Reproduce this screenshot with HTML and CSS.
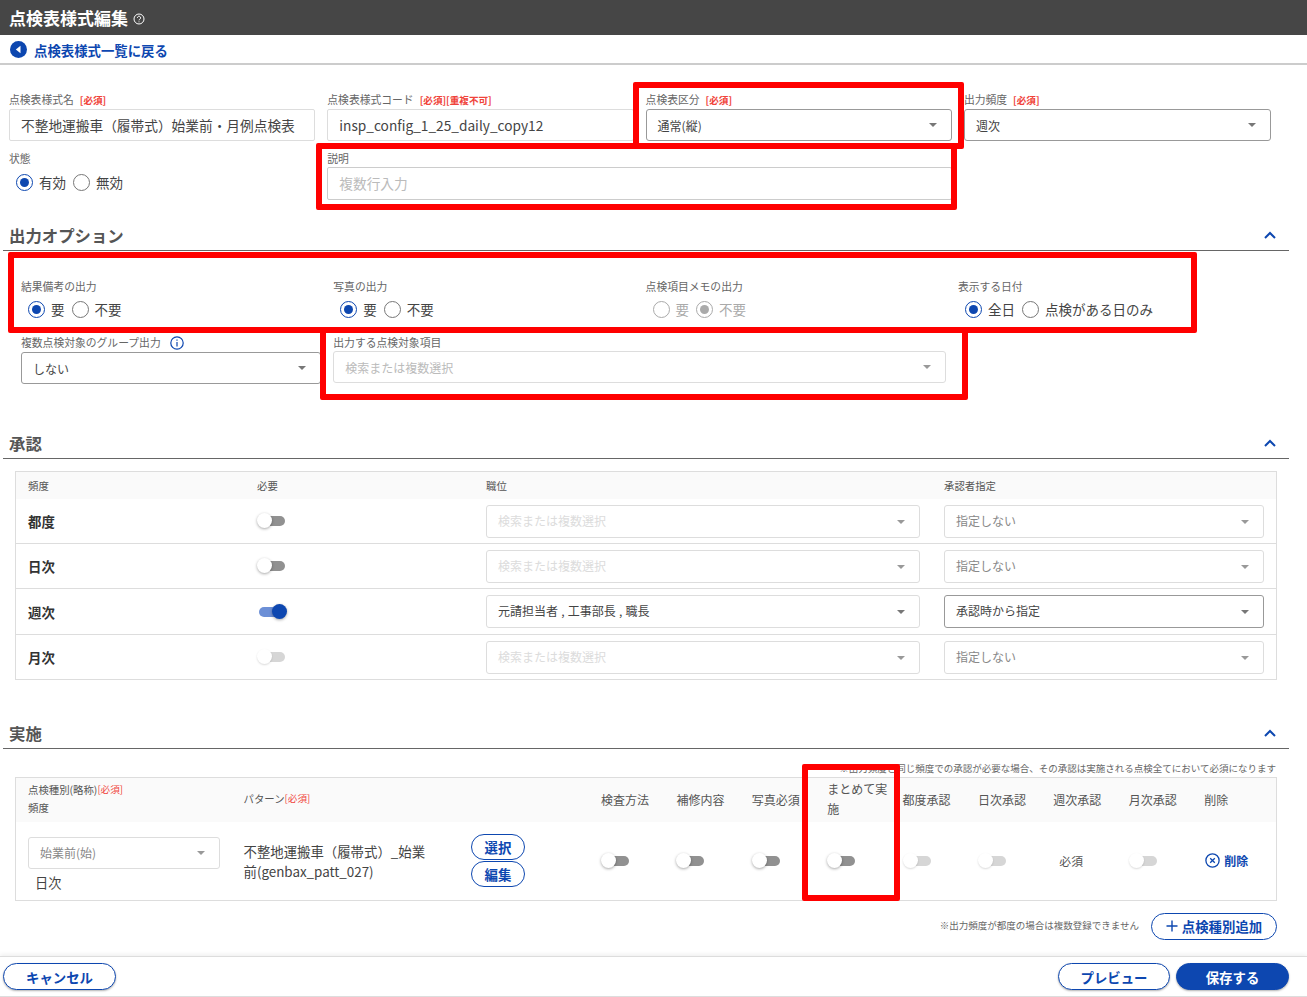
FILE: index.html
```html
<!DOCTYPE html>
<html lang="ja">
<head>
<meta charset="UTF-8" />
<meta name="viewport" content="width=device-width, initial-scale=1.0">
<title>点検表様式編集</title>
<link rel="stylesheet" href="styles.css">
</head>
<body>
<div class="page">

  <header class="title-bar">
    <h1>点検表様式編集</h1>
    <svg class="help-icon" width="12" height="12" viewBox="0 0 12 12" fill="none" stroke="#fff" stroke-width="1">
      <circle cx="6" cy="6" r="5"/>
      <path d="M4.4 4.8a1.6 1.6 0 1 1 2.4 1.4c-.5.3-.8.6-.8 1.1"/>
      <path d="M6 8.4v.9"/>
    </svg>
  </header>

  <nav class="back-bar">
    <svg width="17" height="17" viewBox="0 0 17 17"><circle cx="8.5" cy="8.5" r="8.5" fill="#0d47b0"/><path d="M10.5 4.8v7.4L5.8 8.5z" fill="#fff"/></svg>
    <a class="back-link">点検表様式一覧に戻る</a>
  </nav>

  <section class="basic-form">
    <div class="field">
      <label class="field-label">点検表様式名<em>[必須]</em></label>
      <div class="input">不整地運搬車（履帯式）始業前・月例点検表</div>
    </div>
    <div class="field">
      <label class="field-label">点検表様式コード<em>[必須][重複不可]</em></label>
      <div class="input">insp_config_1_25_daily_copy12</div>
    </div>
    <div class="field">
      <label class="field-label">点検表区分<em>[必須]</em></label>
      <div class="select">通常(縦)</div>
    </div>
    <div class="field">
      <label class="field-label">出力頻度<em>[必須]</em></label>
      <div class="select">週次</div>
    </div>
    <div class="field">
      <label class="field-label">状態</label>
      <div class="radios">
        <span class="radio checked"></span><span>有効</span>
        <span class="radio"></span><span>無効</span>
      </div>
    </div>
    <div class="field span-2">
      <label class="field-label">説明</label>
      <div class="input textarea placeholder">複数行入力</div>
    </div>
  </section>

  <div class="section-head">
    <h2>出力オプション</h2>
    <svg class="chevron" width="14" height="9" viewBox="0 0 14 9" fill="none" stroke="#0d47b0" stroke-width="2"><path d="M2 7l5-5 5 5"/></svg>
  </div>

  <section class="output-options">
    <div class="field">
      <label class="field-label">結果備考の出力</label>
      <div class="radios">
        <span class="radio checked"></span><span>要</span>
        <span class="radio"></span><span>不要</span>
      </div>
    </div>
    <div class="field">
      <label class="field-label">写真の出力</label>
      <div class="radios">
        <span class="radio checked"></span><span>要</span>
        <span class="radio"></span><span>不要</span>
      </div>
    </div>
    <div class="field">
      <label class="field-label">点検項目メモの出力</label>
      <div class="radios disabled">
        <span class="radio"></span><span>要</span>
        <span class="radio checked"></span><span>不要</span>
      </div>
    </div>
    <div class="field">
      <label class="field-label">表示する日付</label>
      <div class="radios">
        <span class="radio checked"></span><span>全日</span>
        <span class="radio"></span><span>点検がある日のみ</span>
      </div>
    </div>
    <div class="field">
      <label class="field-label">複数点検対象のグループ出力
        <svg class="info-icon" width="14" height="14" viewBox="0 0 14 14" fill="none" stroke="#0d47b0" stroke-width="1.2"><circle cx="7" cy="7" r="6.2"/><path d="M7 6v4.4M7 3.4v1.4"/></svg>
      </label>
      <div class="select">しない</div>
    </div>
    <div class="field span-2">
      <label class="field-label">出力する点検対象項目</label>
      <div class="select off placeholder">検索または複数選択</div>
    </div>
  </section>

  <div class="section-head approval-head">
    <h2>承認</h2>
    <svg class="chevron" width="14" height="9" viewBox="0 0 14 9" fill="none" stroke="#0d47b0" stroke-width="2"><path d="M2 7l5-5 5 5"/></svg>
  </div>

  <section class="approval-table">
    <div class="approval-row head">
      <div>頻度</div><div>必要</div><div>職位</div><div>承認者指定</div>
    </div>
    <div class="approval-row">
      <div class="row-name">都度</div>
      <div><span class="toggle"></span></div>
      <div class="select off faint">検索または複数選択</div>
      <div class="select off muted">指定しない</div>
    </div>
    <div class="approval-row">
      <div class="row-name">日次</div>
      <div><span class="toggle"></span></div>
      <div class="select off faint">検索または複数選択</div>
      <div class="select off muted">指定しない</div>
    </div>
    <div class="approval-row tall">
      <div class="row-name">週次</div>
      <div><span class="toggle on"></span></div>
      <div class="select light">元請担当者 , 工事部長 , 職長</div>
      <div class="select">承認時から指定</div>
    </div>
    <div class="approval-row last">
      <div class="row-name">月次</div>
      <div><span class="toggle off"></span></div>
      <div class="select off faint">検索または複数選択</div>
      <div class="select off muted">指定しない</div>
    </div>
  </section>

  <div class="section-head work-head">
    <h2>実施</h2>
    <svg class="chevron" width="14" height="9" viewBox="0 0 14 9" fill="none" stroke="#0d47b0" stroke-width="2"><path d="M2 7l5-5 5 5"/></svg>
  </div>

  <p class="note top-note">※出力頻度と同じ頻度での承認が必要な場合、その承認は実施される点検全てにおいて必須になります</p>

  <section class="work-table">
    <div class="work-row head">
      <div class="small-head">
        <div>点検種別(略称)<em>[必須]</em></div>
        <div>頻度</div>
      </div>
      <div class="small-head">パターン<em>[必須]</em></div>
      <div></div>
      <div>検査方法</div>
      <div>補修内容</div>
      <div>写真必須</div>
      <div class="wrap-cell">まとめて実施</div>
      <div>都度承認</div>
      <div>日次承認</div>
      <div>週次承認</div>
      <div>月次承認</div>
      <div>削除</div>
    </div>
    <div class="work-row body">
      <div class="kind-cell">
        <div class="select off muted">始業前(始)</div>
        <div class="freq">日次</div>
      </div>
      <div class="pattern-name">不整地運搬車（履帯式）_始業前(genbax_patt_027)</div>
      <div class="pattern-btns">
        <button class="pill">選択</button>
        <button class="pill">編集</button>
      </div>
      <div><span class="toggle"></span></div>
      <div><span class="toggle"></span></div>
      <div><span class="toggle"></span></div>
      <div><span class="toggle"></span></div>
      <div><span class="toggle off"></span></div>
      <div><span class="toggle off"></span></div>
      <div class="required-text">必須</div>
      <div><span class="toggle off"></span></div>
      <div class="delete-cell">
        <svg width="15" height="15" viewBox="0 0 15 15" fill="none" stroke="#0d47b0" stroke-width="1.3"><circle cx="7.5" cy="7.5" r="6.6"/><path d="M5.2 5.2l4.6 4.6M9.8 5.2l-4.6 4.6"/></svg>
        <span>削除</span>
      </div>
    </div>
  </section>

  <div class="add-row">
    <p class="note">※出力頻度が都度の場合は複数登録できません</p>
    <button class="pill add-btn">
      <svg width="12" height="12" viewBox="0 0 12 12" stroke="#0d47b0" stroke-width="1.4"><path d="M6 .5v11M.5 6h11"/></svg>
      点検種別追加
    </button>
  </div>

  <footer class="footer-bar">
    <button class="pill foot-btn">キャンセル</button>
    <div class="foot-right">
      <button class="pill foot-btn">プレビュー</button>
      <button class="pill foot-btn primary">保存する</button>
    </div>
  </footer>

  <!-- red annotation boxes drawn over the form -->
  <div class="mark mark-kubun"></div>
  <div class="mark mark-setsumei"></div>
  <div class="mark mark-options"></div>
  <div class="mark mark-taisho"></div>
  <div class="mark mark-matome"></div>
</div>
</body>
</html>
```

FILE: styles.css
```css
* {
  box-sizing: border-box;
}

body {
  margin: 0;
  font-family: "Noto Sans CJK JP", "Noto Sans", sans-serif;
  color: #444;
  background: #fff;
}

.page {
  position: relative;
  width: 1307px;
  height: 997px;
  overflow: hidden;
}

em {
  font-style: normal;
  color: #f0433a;
}

/* Title and back link */
.title-bar {
  height: 35px;
  background: #464646;
  display: flex;
  align-items: center;
  padding-left: 9px;
  color: #fff;
}

.title-bar h1 {
  margin: 0;
  font-size: 17px;
  font-weight: 700;
}

.help-icon {
  margin-left: 5px;
  margin-top: 2px;
}

.back-bar {
  height: 30px;
  display: flex;
  align-items: center;
  gap: 7px;
  padding: 1px 0 0 10px;
  border-bottom: 2px solid #ccc;
}

.back-link {
  font-size: 13.4px;
  font-weight: 700;
  color: #0d47b0;
}

/* Form fields */
.basic-form {
  display: grid;
  grid-template-columns: repeat(4, 318.3px);
  padding: 28px 0 0 9px;
  row-gap: 11px;
}

.basic-form .field {
  padding-right: 11.5px;
}

.basic-form .field:first-child {
  padding-right: 12.3px;
}

.basic-form .radios {
  margin-top: 6px;
}

.output-options {
  display: grid;
  grid-template-columns: repeat(4, 312.3px);
  padding: 29px 0 0 21px;
  row-gap: 17px;
}

.field {
  padding-right: 12px;
}

.span-2 {
  grid-column: span 2;
}

.field-label {
  display: block;
  height: 14px;
  line-height: 12px;
  font-size: 10.8px;
  color: #666;
  margin-bottom: 2px;
  white-space: nowrap;
}

.field-label em {
  font-size: 9.6px;
  font-weight: 700;
  margin-left: 6px;
}

.info-icon {
  vertical-align: -3px;
  margin-left: 7px;
}

.basic-form .span-2 .field-label {
  margin-bottom: 1px;
}

.output-options .span-2 .field-label {
  margin-bottom: 1px;
}

.input,
.select {
  position: relative;
  height: 32px;
  line-height: 31px;
  padding-left: 11px;
  font-size: 13.7px;
  color: #444;
  border: 1px solid #ddd;
  border-radius: 2px;
  white-space: nowrap;
}

.textarea {
  height: 33px;
  border-color: #ccc;
}

.select {
  border-color: #999;
  border-radius: 3px;
  font-size: 12px;
}

.select::after {
  content: "";
  position: absolute;
  right: 14px;
  top: 13px;
  border: 4px solid transparent;
  border-top: 4px solid #777;
  border-bottom: 0;
}

.select.off {
  border-color: #ddd;
}

.select.off::after {
  border-top-color: #999;
}

.placeholder {
  color: #bbb;
}

.select.faint {
  color: #dcdcdc;
}

.select.muted {
  color: #888;
}

.select.light {
  border-color: #ddd;
  word-spacing: 0.5px;
}

/* Radios */
.radios {
  display: flex;
  align-items: center;
  gap: 6px;
  height: 20px;
  margin-top: 5px;
  padding-left: 7px;
  font-size: 13.5px;
}

.radio {
  width: 17px;
  height: 17px;
  border: 1.5px solid #777;
  border-radius: 50%;
  display: flex;
  align-items: center;
  justify-content: center;
}

.radio ~ .radio {
  margin-left: 1px;
}

.radio.checked {
  border-color: #0d47b0;
}

.radio.checked::after {
  content: "";
  width: 9px;
  height: 9px;
  border-radius: 50%;
  background: #0d47b0;
}

.radios.disabled {
  color: #aaa;
}

.radios.disabled .radio {
  border-color: #aaa;
}

.radios.disabled .radio.checked::after {
  background: #aaa;
}

/* Section headings */
.section-head {
  height: 29px;
  margin: 22px 18px 0 3px;
  padding: 0 12px 0 6px;
  border-bottom: 1px solid #666;
  display: flex;
  align-items: center;
  justify-content: space-between;
}

.section-head h2 {
  margin: 0;
  padding-bottom: 2px;
  font-size: 16.4px;
  font-weight: 700;
  color: #555;
}

.chevron {
  margin-top: -1px;
}

.approval-head {
  margin-top: 46px;
}

.work-head {
  margin-top: 40px;
}

/* Approval table */
.approval-table {
  margin: 12px 30px 0 15px;
  border: 1px solid #ddd;
  height: 209px;
}

.approval-row {
  display: grid;
  grid-template-columns: 229px 229px 458px 320px;
  align-items: center;
  height: 45px;
  padding-left: 12px;
  border-bottom: 1px solid #ddd;
}

.approval-row.head {
  height: 27px;
  background: #fafafa;
  border-bottom: 0;
  font-size: 10.4px;
  color: #555;
}

.approval-row.tall {
  height: 46px;
}

.approval-row.last {
  border-bottom: 0;
  height: 44px;
}

.row-name {
  font-size: 13.4px;
  font-weight: 700;
  color: #333;
}

.approval-row .select {
  height: 33px;
  line-height: 29px;
}

.approval-row .select:nth-child(3) {
  margin-right: 24px;
}

.approval-row .select::after {
  top: 14px;
}

.approval-row .toggle {
  margin-top: -2px;
}

.approval-row.tall .toggle {
  margin-top: 0;
}

/* Toggles */
.toggle {
  display: block;
  position: relative;
  width: 30px;
  height: 15px;
}

.toggle::before {
  content: "";
  position: absolute;
  left: 2px;
  top: 3px;
  width: 26px;
  height: 10px;
  border-radius: 5px;
  background: #919191;
}

.toggle::after {
  content: "";
  position: absolute;
  left: 0;
  top: 0;
  width: 15px;
  height: 15px;
  border-radius: 50%;
  background: #fff;
  box-shadow: 0 1px 3px rgba(0,0,0,0.35);
}

.toggle.off::before {
  background: #d6d6d6;
}

.toggle.off::after {
  box-shadow: 0 1px 2px rgba(0,0,0,0.15);
}

.toggle.on::before {
  background: #6c8fd6;
}

.toggle.on::after {
  left: 15px;
  background: #0d47b0;
}

/* Work table */
.note {
  margin: 0;
  font-size: 9.5px;
  color: #666;
  white-space: nowrap;
}

.top-note {
  height: 28px;
  line-height: 14px;
  padding: 12px 31px 0 0;
  text-align: right;
}

.work-table {
  margin: 0 30px 0 15px;
  border: 1px solid #ddd;
  height: 124px;
}

.work-row {
  display: grid;
  grid-template-columns: 215.5px 227.5px 130px 75.4px 75.4px 75.4px 75.4px 75.4px 75.4px 75.4px 75.4px 75.4px;
  align-items: center;
  padding-left: 12px;
}

.work-row.head {
  height: 44px;
  padding-bottom: 2px;
  background: #fafafa;
  font-size: 12px;
  color: #555;
}

.small-head {
  font-size: 10.4px;
  line-height: 18px;
}

.small-head em {
  font-size: 9.6px;
  position: relative;
  top: -1px;
}

.wrap-cell {
  line-height: 20px;
  padding-right: 12px;
}

.work-row.body {
  height: 78px;
}

.work-row.body .toggle,
.pattern-btns,
.required-text,
.delete-cell {
  margin-top: -2px;
}

.kind-cell {
  padding-right: 24px;
}

.kind-cell .select {
  margin-top: 8px;
  line-height: 29px;
}

.freq {
  font-size: 13.2px;
  padding-left: 7px;
  margin-top: 3px;
  line-height: 22px;
}

.pattern-name {
  width: 190px;
  font-size: 13.4px;
  line-height: 20px;
}

.pattern-btns {
  display: flex;
  flex-direction: column;
  gap: 1px;
}

.pill {
  font-family: inherit;
  font-weight: 700;
  font-size: 13.4px;
  color: #0d47b0;
  background: #fff;
  border: 1px solid #0d47b0;
  border-radius: 14px;
  padding: 0;
}

.pattern-btns .pill {
  width: 54px;
  height: 26px;
}

.required-text {
  font-size: 11.8px;
  padding-left: 6px;
  color: #555;
}

.delete-cell {
  display: flex;
  align-items: center;
  gap: 4px;
  padding-left: 1px;
  font-size: 12px;
  font-weight: 700;
  color: #0d47b0;
}

.add-row {
  display: flex;
  justify-content: flex-end;
  align-items: center;
  gap: 12px;
  height: 27px;
  margin: 12px 30px 0 0;
}

.add-row .note {
  margin-top: -3px;
}

.add-btn {
  width: 126px;
  height: 27px;
  padding-bottom: 2px;
  display: flex;
  align-items: center;
  justify-content: center;
  gap: 4px;
}

/* Footer */
.footer-bar {
  height: 41px;
  margin-top: 16px;
  padding: 6px 18px 0 3px;
  display: flex;
  justify-content: space-between;
  align-items: flex-start;
  border-top: 1px solid #ddd;
  border-bottom: 1px solid #ddd;
  box-shadow: 0 -2px 4px rgba(0,0,0,0.06);
}

.foot-right {
  display: flex;
  gap: 6px;
}

.foot-btn {
  width: 113px;
  height: 27px;
  box-shadow: 0 1px 2px rgba(0,0,0,0.3);
}

.foot-right .foot-btn:first-child {
  width: 112px;
}

.foot-btn.primary {
  background: #0d47b0;
  color: #fff;
}

/* Red annotation boxes */
.mark {
  position: absolute;
  border: 6px solid #f00;
  border-radius: 2px;
}

.mark-kubun {
  left: 633px;
  top: 82px;
  width: 331px;
  height: 67px;
}

.mark-setsumei {
  left: 316px;
  top: 143px;
  width: 641px;
  height: 67px;
}

.mark-options {
  left: 8px;
  top: 252px;
  width: 1189px;
  height: 81px;
}

.mark-taisho {
  left: 320px;
  top: 327px;
  width: 648px;
  height: 73px;
}

.mark-matome {
  left: 802px;
  top: 764px;
  width: 98px;
  height: 137px;
}
```
